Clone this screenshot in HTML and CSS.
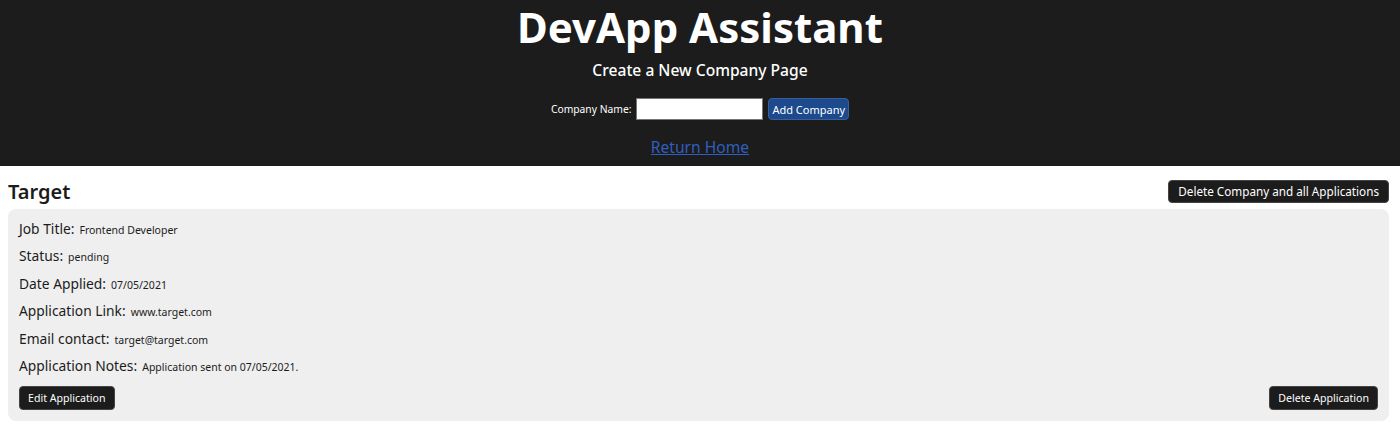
FILE: index.html
```html
<!DOCTYPE html>
<html lang="en">
<head>
<meta charset="utf-8">
<title>DevApp Assistant</title>
<link rel="stylesheet" href="styles.css">
</head>
<body>
<header class="hero">
  <h1 class="hero-title">DevApp Assistant</h1>
  <h2 class="hero-sub">Create a New Company Page</h2>
  <form class="company-form">
    <label class="form-label" for="cname">Company Name:</label>
    <input class="form-input" id="cname" type="text">
    <button class="btn-blue" type="button">Add Company</button>
  </form>
  <a class="home-link" href="#">Return Home</a>
</header>
<main class="content">
  <div class="company-head">
    <h2 class="company-name">Target</h2>
    <button class="btn-dark" type="button">Delete Company and all Applications</button>
  </div>
  <section class="card">
    <div class="row"><span class="lbl">Job Title:</span><span class="val">Frontend Developer</span></div>
    <div class="row"><span class="lbl">Status:</span><span class="val">pending</span></div>
    <div class="row"><span class="lbl">Date Applied:</span><span class="val">07/05/2021</span></div>
    <div class="row"><span class="lbl">Application Link:</span><span class="val">www.target.com</span></div>
    <div class="row"><span class="lbl">Email contact:</span><span class="val">target@target.com</span></div>
    <div class="row"><span class="lbl">Application Notes:</span><span class="val">Application sent on 07/05/2021.</span></div>
    <div class="card-actions">
      <button class="btn-dark btn-sm" type="button">Edit Application</button>
      <button class="btn-dark btn-sm" type="button">Delete Application</button>
    </div>
  </section>
</main>
</body>
</html>
```
FILE: styles.css
```css
* { box-sizing: border-box; }
body {
  margin: 0;
  font-family: "Noto Sans", "Open Sans", sans-serif;
  color: #1c1c1c;
  background: #fff;
}
.hero {
  background: #1c1c1c;
  color: #fff;
  height: 166px;
  display: flex;
  flex-direction: column;
  align-items: center;
  padding-top: 2px;
}
.hero-title {
  margin: 0;
  font-size: 42px;
  font-weight: 700;
  line-height: 50px;
}
.hero-sub {
  margin: 6px 0 0;
  font-size: 15.6px;
  font-weight: 500;
  line-height: 24px;
}
.company-form {
  margin-top: 16px;
  display: flex;
  align-items: center;
  gap: 5px;
}
.form-label { font-size: 10.3px; }
.form-input {
  width: 127px;
  height: 22px;
  border: 1px solid #767676;
  background: #fff;
  margin: 0;
}
.btn-blue {
  height: 22px;
  padding: 0 3px;
  background: #1d4a8c;
  color: #fff;
  border: 1px solid #3a5f99;
  border-radius: 4px;
  font-family: inherit;
  font-size: 11px;
}
.home-link {
  margin-top: 17px;
  color: #2f5fbf;
  font-size: 15.6px;
  line-height: 20px;
}
.content { padding: 11px 11px 8px 8px; }
.company-head {
  display: flex;
  justify-content: space-between;
  align-items: center;
  height: 28px;
}
.company-name {
  margin: 0;
  font-size: 20px;
  font-weight: 600;
}
.btn-dark {
  background: #1c1c1c;
  color: #fff;
  border: 1px solid #444;
  border-radius: 4px;
  font-family: inherit;
  font-size: 11.7px;
  height: 23px;
  padding: 0 9px;
}
.card {
  margin-top: 4px;
  background: #efefef;
  border-radius: 8px;
  padding: 6px 11px 11px;
}
.row {
  display: flex;
  align-items: baseline;
  gap: 5px;
  height: 27.4px;
  line-height: 27px;
}
.lbl { font-size: 13.8px; }
.val { font-size: 10.5px; }
.card-actions {
  display: flex;
  justify-content: space-between;
  margin-top: 7px;
}
.btn-sm { font-size: 10.6px; height: 24px; padding: 0 8px; }
```
